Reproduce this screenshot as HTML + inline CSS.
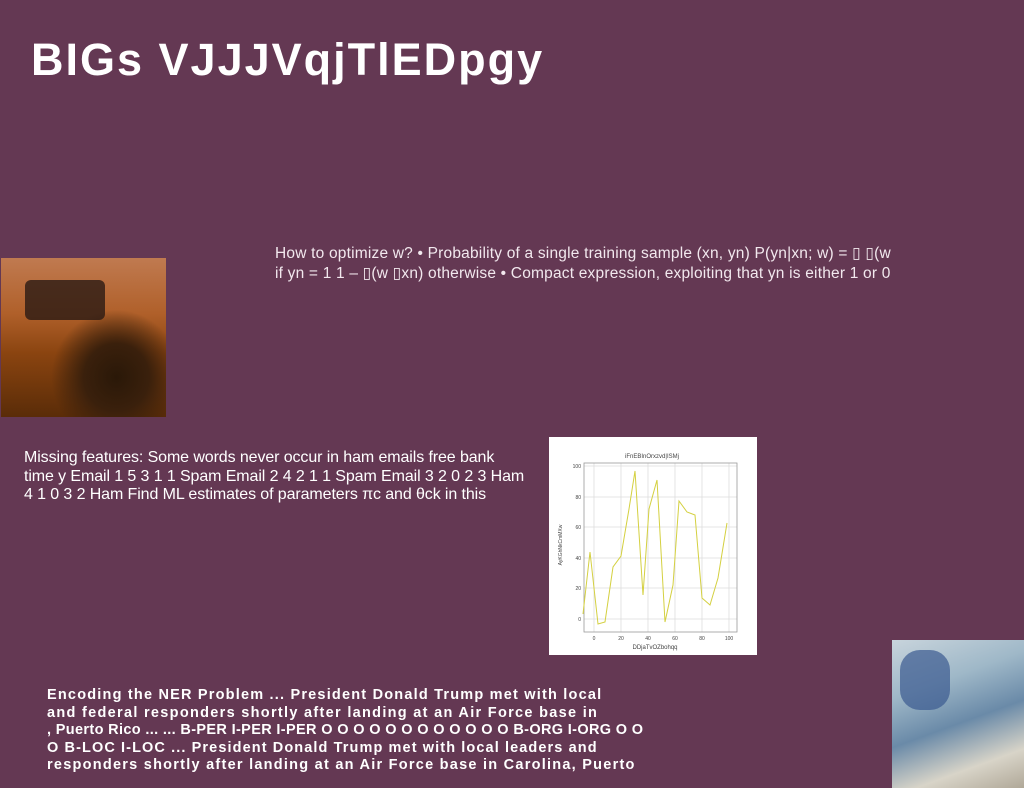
<!DOCTYPE html>
<html><head><meta charset="utf-8"><style>
body{margin:0;width:1024px;height:788px;background:#643853;position:relative;overflow:hidden;font-family:"Liberation Sans",sans-serif;color:#fff}
.a{position:absolute;white-space:nowrap}
h1{position:absolute;left:31px;top:34px;margin:0;font-size:45px;font-weight:bold;letter-spacing:2px;line-height:52px}
.t1{left:275px;top:244px;font-size:15.5px;line-height:19.5px;color:#f2e8ee;letter-spacing:0.2px}
.t2{left:24px;top:449px;font-size:16px;line-height:18.5px;letter-spacing:-0.1px}
.t3{left:47px;top:687px;font-size:14.5px;font-weight:bold;line-height:17.5px}
.t3 span{display:block}
</style></head><body>
<h1>BIGs VJJJVqjTlEDpgy</h1>
<div class="a" style="left:1px;top:258px;width:165px;height:159px;background:radial-gradient(ellipse at 70% 75%,#2a1808 0,#3a200c 20%,transparent 40%),linear-gradient(180deg,#c07a50 0%,#b0602a 35%,#8a4410 60%,#5a2c08 100%)"></div>
<div class="a" style="left:25px;top:280px;width:80px;height:40px;background:#2a1a14;opacity:.8;border-radius:6px"></div>
<div class="a t1">How to optimize w? • Probability of a single training sample (xn, yn) P(yn|xn; w) = ▯ ▯(w<br>if yn = 1 1 – ▯(w ▯xn) otherwise • Compact expression, exploiting that yn is either 1 or 0</div>
<div class="a t2">Missing features: Some words never occur in ham emails free bank<br>time y Email 1 5 3 1 1 Spam Email 2 4 2 1 1 Spam Email 3 2 0 2 3 Ham<br>4 1 0 3 2 Ham Find ML estimates of parameters πc and θck in this</div>
<svg class="a" style="left:549px;top:437px" width="208" height="218" viewBox="549 437 208 218">
<rect x="549" y="437" width="208" height="218" fill="#fff"/>
<g stroke="#ddd" stroke-width="0.8">
<line x1="594" y1="463" x2="594" y2="632"/><line x1="621" y1="463" x2="621" y2="632"/><line x1="648" y1="463" x2="648" y2="632"/><line x1="675" y1="463" x2="675" y2="632"/><line x1="702" y1="463" x2="702" y2="632"/><line x1="729" y1="463" x2="729" y2="632"/>
<line x1="584" y1="619" x2="737" y2="619"/><line x1="584" y1="588" x2="737" y2="588"/><line x1="584" y1="558" x2="737" y2="558"/><line x1="584" y1="527" x2="737" y2="527"/><line x1="584" y1="497" x2="737" y2="497"/><line x1="584" y1="466" x2="737" y2="466"/>
</g>
<rect x="584" y="463" width="153" height="169" fill="none" stroke="#999" stroke-width="0.8"/>
<polyline fill="none" stroke="#d4d040" stroke-width="1" points="583,614 590,552 598,624 605,622 613,567 621,556 629,509 635,471 643,595 649,509 657,480 665,622 673,585 679,501 687,512 695,515 702,598 710,605 718,578 727,523"/>
<g font-size="5" fill="#444" font-family="Liberation Sans">
<text x="652" y="458" text-anchor="middle" font-size="6">iFnEBInOrxzvd|ISMj</text>
<text x="594" y="640" text-anchor="middle">0</text><text x="621" y="640" text-anchor="middle">20</text><text x="648" y="640" text-anchor="middle">40</text><text x="675" y="640" text-anchor="middle">60</text><text x="702" y="640" text-anchor="middle">80</text><text x="729" y="640" text-anchor="middle">100</text>
<text x="655" y="649" text-anchor="middle" font-size="6">DDjaTvOZbohqq</text>
<text x="581" y="621" text-anchor="end">0</text><text x="581" y="590" text-anchor="end">20</text><text x="581" y="560" text-anchor="end">40</text><text x="581" y="529" text-anchor="end">60</text><text x="581" y="499" text-anchor="end">80</text><text x="581" y="468" text-anchor="end">100</text>
<text transform="translate(562,545) rotate(-90)" text-anchor="middle">AyKGhNkCmMXw</text>
</g></svg>
<div class="a t3"><span style="letter-spacing:1.2px">Encoding the NER Problem ... President Donald Trump met with local</span><span style="letter-spacing:1.3px">and federal responders shortly after landing at an Air Force base in</span><span style="letter-spacing:0.35px">, Puerto Rico ... ... B-PER I-PER I-PER O O O O O O O O O O O O B-ORG I-ORG O O</span><span style="letter-spacing:1.1px">O B-LOC I-LOC ... President Donald Trump met with local leaders and</span><span style="letter-spacing:1.25px">responders shortly after landing at an Air Force base in Carolina, Puerto</span></div>
<div class="a" style="left:892px;top:640px;width:132px;height:148px;background:linear-gradient(160deg,#c8d4dc 0%,#9fb8c8 30%,#6a8aa8 55%,#d8d4c8 80%,#b0a898 100%)"></div>
<div class="a" style="left:900px;top:650px;width:50px;height:60px;background:#3a5a90;border-radius:20px;opacity:.7"></div>
</body></html>
